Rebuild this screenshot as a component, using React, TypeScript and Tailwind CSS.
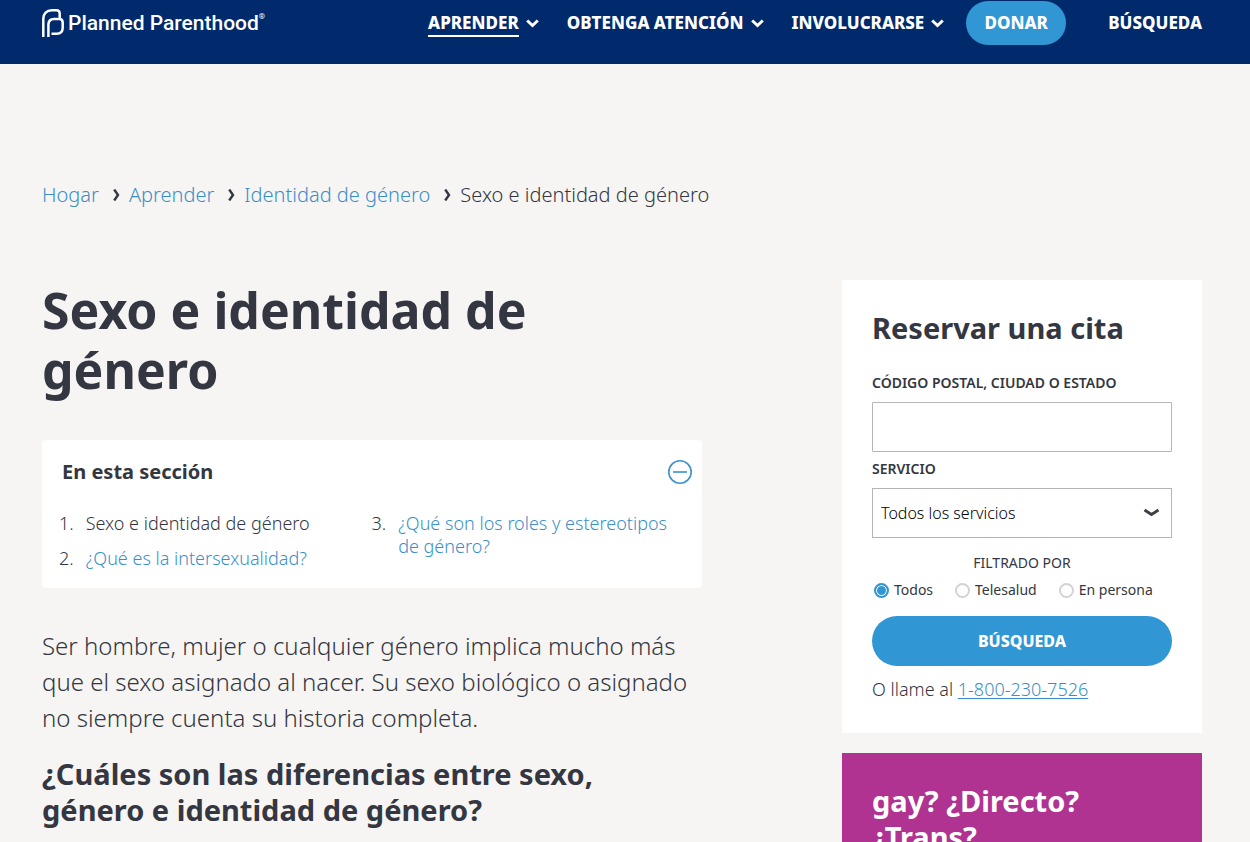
import { useState } from 'react'

const navItems = [
  { label: 'APRENDER', active: true },
  { label: 'OBTENGA ATENCIÓN', active: false },
  { label: 'INVOLUCRARSE', active: false },
]

const crumbs = ['Hogar', 'Aprender', 'Identidad de género']

const sections = [
  { label: 'Sexo e identidad de género', current: true },
  { label: '¿Qué es la intersexualidad?', current: false },
  { label: '¿Qué son los roles y estereotipos de género?', current: false },
]

const filters = ['Todos', 'Telesalud', 'En persona']

function Logo() {
  return (
    <a href="#" className="flex items-center gap-1 text-white" aria-label="Planned Parenthood">
      <svg width="22" height="28" viewBox="0 0 22 28" fill="none" stroke="currentColor" strokeWidth="2.500">
        <path d="M1.300 28V10C1.300 4.500 4.500 1.300 10 1.300H14.500C16.800 1.300 17.700 2.300 17.700 4.600V10" />
        <path d="M6.400 28V16C6.400 12 8.500 10 12 10H17.200C19.600 10 20.700 11.300 20.700 13.700V18.500C20.700 22.600 18.700 24.700 14.700 24.700H9.500" />
      </svg>
      <span className="flex items-start font-[Roboto] text-[21px] leading-6 font-medium">
        Planned Parenthood
        <span className="text-[8px] leading-3">®</span>
      </span>
    </a>
  )
}

function Chevron() {
  return (
    <svg width="13" height="9" viewBox="0 0 13 9" fill="none" stroke="currentColor" strokeWidth="3">
      <path d="M1.200 1.500L6.500 6.500L11.800 1.500" />
    </svg>
  )
}

function Header() {
  return (
    <header className="bg-[#002a6c] pr-12 pb-[18px] pl-[42px]">
      <div className="flex h-[46px] items-center justify-between">
        <Logo />
        <nav className="flex items-center text-[17px] leading-6 font-extrabold text-white">
          <div className="flex gap-7">
            {navItems.map((item) => (
              <a key={item.label} href="#" className="flex items-center gap-[7px]">
                <span className={item.active ? 'border-y-2 border-t-transparent border-b-white' : ''}>
                  {item.label}
                </span>
                <Chevron />
              </a>
            ))}
          </div>
          <a href="#" className="ml-[22px] flex h-11 w-[100px] items-center justify-center rounded-full bg-[#3096d4]">
            DONAR
          </a>
          <button type="button" className="ml-[42px]">
            BÚSQUEDA
          </button>
        </nav>
      </div>
    </header>
  )
}

function Breadcrumbs() {
  return (
    <nav aria-label="Breadcrumb">
      <ol className="flex flex-wrap text-xl leading-[30px] font-[350]">
        {crumbs.map((crumb) => (
          <li key={crumb} className="flex items-center">
            <a href="#" className="text-[#3a8fc8]">
              {crumb}
            </a>
            <svg
              className="mr-[9px] ml-[14px]"
              width="7"
              height="12"
              viewBox="0 0 7 12"
              fill="none"
              stroke="currentColor"
              strokeWidth="2.400"
            >
              <path d="M1.200 0.500L5 6L1.200 11.500" />
            </svg>
          </li>
        ))}
        <li aria-current="page">Sexo e identidad de género</li>
      </ol>
    </nav>
  )
}

function SectionItem({ index }: { index: number }) {
  const section = sections[index]
  return (
    <li className="flex gap-3">
      <span>{index + 1}.</span>
      {section.current ? (
        <span>{section.label}</span>
      ) : (
        <a href="#" className="text-[#3a8fc8]">
          {section.label}
        </a>
      )}
    </li>
  )
}

function SectionNav() {
  const [open, setOpen] = useState(true)

  return (
    <div className="rounded bg-white pt-5 pr-[10px] pb-[18px] pl-[17px]">
      <div className="flex items-center justify-between pl-[3px]">
        <h2 className="text-xl leading-6 font-bold">En esta sección</h2>
        <button type="button" aria-label="En esta sección" aria-expanded={open} onClick={() => setOpen((o) => !o)}>
          <svg width="24" height="24" viewBox="0 0 24 24" fill="none" stroke="#3c93cb" strokeWidth="1.600">
            <circle cx="12" cy="12" r="11.200" />
            <path d="M5 12H19" />
            {!open && <path d="M12 5V19" />}
          </svg>
        </button>
      </div>
      {open && (
        <div className="mt-7 grid grid-cols-2 pr-2 text-lg leading-[23px] font-[350]">
          <ol className="flex flex-col gap-3">
            <SectionItem index={0} />
            <SectionItem index={1} />
          </ol>
          <ol start={3}>
            <SectionItem index={2} />
          </ol>
        </div>
      )}
    </div>
  )
}

function BookingForm() {
  const [filter, setFilter] = useState('Todos')

  return (
    <form className="bg-white px-[30px] pt-[30px] pb-8" onSubmit={(e) => e.preventDefault()}>
      <h2 className="text-[29px] leading-9 font-bold">Reservar una cita</h2>

      <label htmlFor="location" className="mt-[27px] block text-sm leading-5 font-semibold">
        CÓDIGO POSTAL, CIUDAD O ESTADO
      </label>
      <input
        id="location"
        type="text"
        className="mt-[9px] block h-[50px] w-full rounded-[1px] border border-[#b3b5b8] bg-white px-2"
      />

      <label htmlFor="service" className="mt-[7px] block text-sm leading-5 font-semibold">
        SERVICIO
      </label>
      <div className="relative mt-[9px]">
        <select
          id="service"
          className="block h-[50px] w-full appearance-none border border-[#b3b5b8] bg-white px-2 text-base font-[350] text-black"
        >
          <option>Todos los servicios</option>
        </select>
        <svg
          className="pointer-events-none absolute top-5 right-3"
          width="17"
          height="10"
          viewBox="0 0 17 10"
          fill="none"
          stroke="#3c3f44"
          strokeWidth="2.800"
        >
          <path d="M1.500 2L8.500 6.500L15.500 2" />
        </svg>
      </div>

      <fieldset className="mt-[15px]">
        <legend className="w-full text-center text-sm leading-5">FILTRADO POR</legend>
        <div className="mt-[7px] flex gap-[22px] pl-[2px]">
          {filters.map((name) => (
            <label key={name} className="flex items-center gap-[5px] text-sm leading-5">
              <input
                type="radio"
                name="filter"
                checked={filter === name}
                onChange={() => setFilter(name)}
                className="size-[15px] appearance-none rounded-full border-2 border-[#d2d3d5] bg-white checked:border-[#3096d4] checked:bg-[#3096d4] checked:shadow-[inset_0_0_0_1px_white]"
              />
              {name}
            </label>
          ))}
        </div>
      </fieldset>

      <button
        type="submit"
        className="mt-4 block h-[50px] w-full rounded-full bg-[#3096d4] text-base font-extrabold text-white"
      >
        BÚSQUEDA
      </button>

      <p className="mt-[11px] text-lg leading-6 font-[350]">
        O llame al{' '}
        <a href="tel:18002307526" className="text-[#3a8fc8] underline underline-offset-2">
          1-800-230-7526
        </a>
      </p>
    </form>
  )
}

export default function App() {
  return (
    <div className="h-screen overflow-hidden bg-[#f6f5f3] font-['Noto_Sans',sans-serif] text-[#343741]">
      <Header />
      <main className="pt-[116px] pr-12 pl-[42px]">
        <Breadcrumbs />
        <div className="mt-[70px] grid grid-cols-[minmax(0,1fr)_360px] items-start gap-[140px]">
          <article>
            <h1 className="max-w-[560px] text-[50px] leading-[60px] font-bold">
              Sexo e identidad de género
            </h1>
            <div className="mt-10">
              <SectionNav />
            </div>
            <p className="mt-10 text-2xl leading-9 font-[350]">
              Ser hombre, mujer o cualquier género implica mucho más que el sexo asignado al nacer. Su sexo
              biológico o asignado no siempre cuenta su historia completa.
            </p>
            <h2 className="mt-5 max-w-[600px] text-[29px] leading-9 font-bold">
              ¿Cuáles son las diferencias entre sexo, género e identidad de género?
            </h2>
          </article>
          <aside className="flex flex-col gap-5">
            <BookingForm />
            <section className="bg-[#b03391] p-[30px] text-white">
              <h2 className="max-w-[240px] text-[29px] leading-9 font-bold">gay? ¿Directo? ¿Trans?</h2>
            </section>
          </aside>
        </div>
      </main>
    </div>
  )
}
